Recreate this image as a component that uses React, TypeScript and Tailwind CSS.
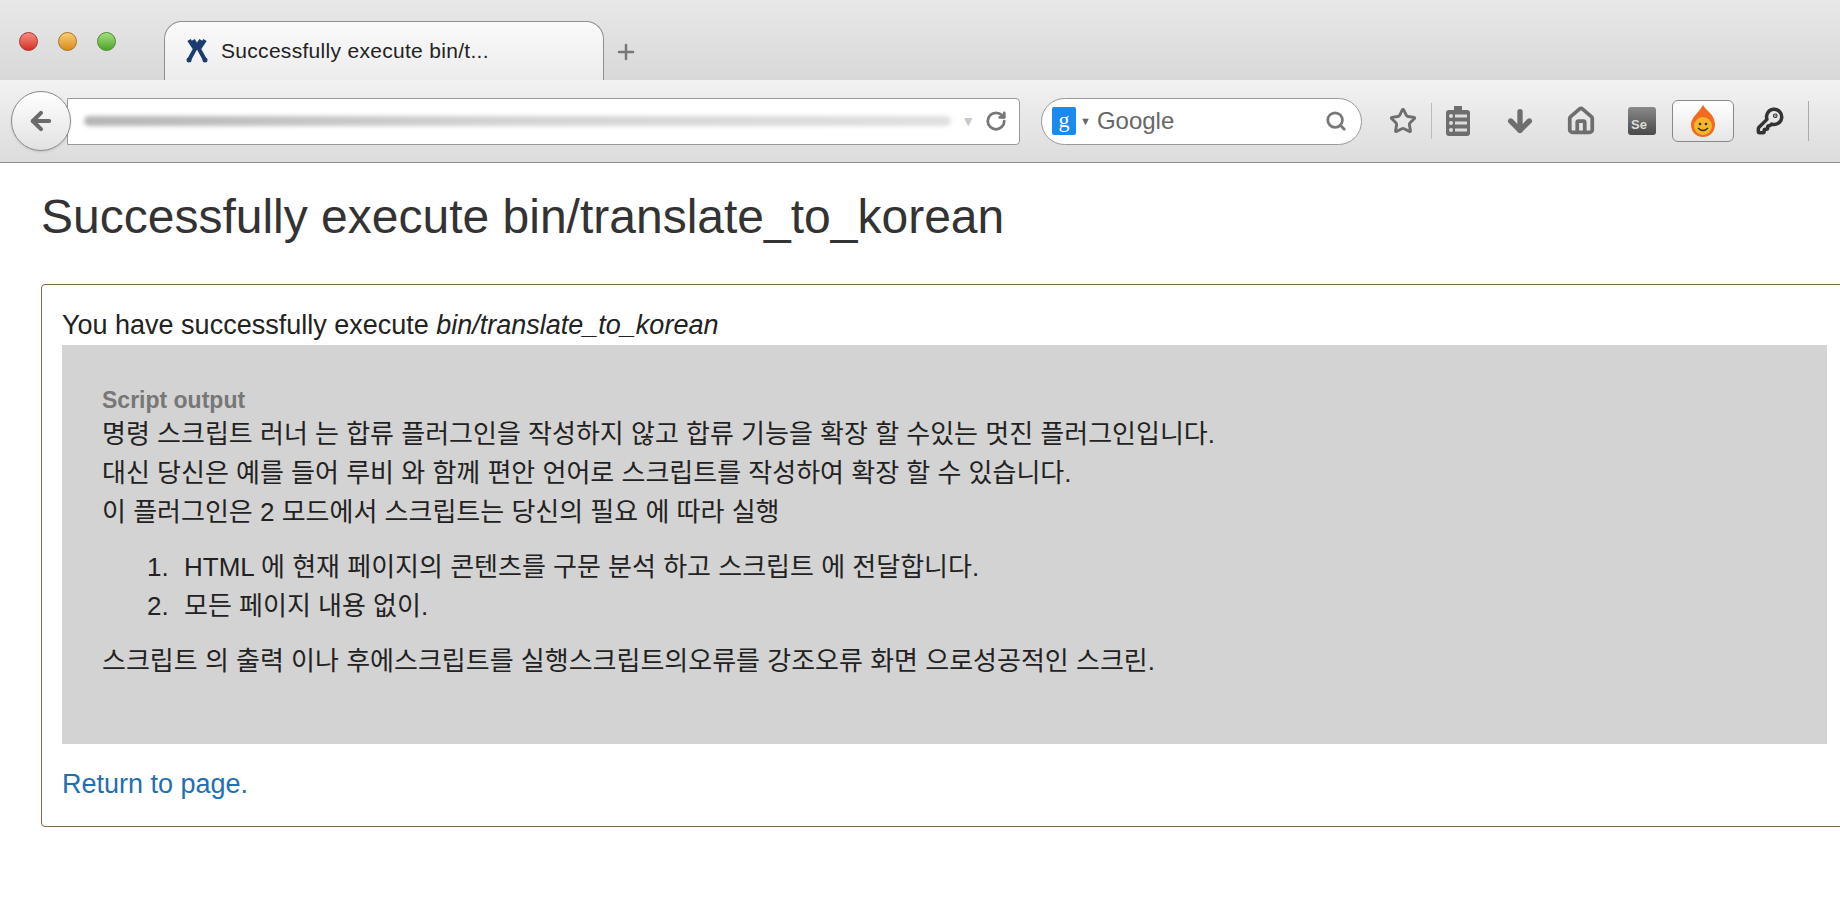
import { Star, ArrowDown, Home, KeyRound, RotateCw, Search, ArrowLeft, Plus } from 'lucide-react';

const ko = { fontFamily: '"Liberation Sans", "Noto Sans CJK KR", sans-serif' };

function Chrome() {
  return (
    <div className="bg-gradient-to-b from-[#e8e8e8] to-[#c9c9c9] border-b border-[#8f8f8f]" style={ko}>
      {/* Tab strip */}
      <div className="h-[80px] flex items-end relative">
        <div className="absolute left-[19px] top-[32px] flex gap-[20px]">
          <span className="w-[19px] h-[19px] rounded-full bg-gradient-to-b from-[#f58a83] to-[#d6291f] border border-[#a8342c]" />
          <span className="w-[19px] h-[19px] rounded-full bg-gradient-to-b from-[#f8cf6f] to-[#d98a15] border border-[#a87321]" />
          <span className="w-[19px] h-[19px] rounded-full bg-gradient-to-b from-[#a4e07d] to-[#4ea32c] border border-[#4d8a2c]" />
        </div>
        <div className="ml-[164px] w-[440px] h-[59px] bg-gradient-to-b from-[#fafafa] to-[#ececec] border border-b-0 border-[#8f8f8f] rounded-t-[18px] flex items-center pl-[20px] gap-[12px]">
          <svg width="24" height="26" viewBox="0 0 24 26">
            <path d="M4 2 L10 11 L4 22 M20 2 L14 11 L20 22 M8 2 L12 8 L16 2" stroke="#1c3b6e" strokeWidth="4" fill="none" />
            <circle cx="4" cy="22" r="2.5" fill="#1c3b6e" />
            <circle cx="20" cy="22" r="2.5" fill="#1c3b6e" />
          </svg>
          <span className="text-[21px] text-[#222] tracking-[0.3px]">Successfully execute bin/t...</span>
        </div>
        <Plus className="ml-[10px] mb-[16px] text-[#777]" size={24} strokeWidth={2.5} />
      </div>
      {/* Toolbar */}
      <div className="h-[82px] flex items-center bg-gradient-to-b from-[#f2f2f2] to-[#dcdcdc] pr-[6px]">
        <div className="ml-[11px] w-[60px] h-[60px] rounded-full border border-[#8a8a8a] bg-gradient-to-b from-white to-[#e2e2e2] flex items-center justify-center z-10 shadow">
          <ArrowLeft size={28} strokeWidth={3.5} className="text-[#6b6b6b]" />
        </div>
        <div className="-ml-[4px] w-[953px] h-[47px] bg-white border border-[#9a9a9a] rounded-r-[4px] flex items-center pl-[16px] pr-[12px] gap-[10px]">
          <div className="flex-1 h-[10px] rounded-full bg-gradient-to-r from-[#b5b5b5] via-[#d4d4d4] to-[#e0e0e0] blur-[2px]" />
          <span className="text-[#c8c8c8] text-[14px]">▼</span>
          <RotateCw size={22} strokeWidth={3} className="text-[#777]" />
        </div>
        <div className="ml-[21px] w-[321px] h-[47px] bg-white border border-[#9a9a9a] rounded-full flex items-center pl-[10px] pr-[14px]">
          <span className="w-[24px] h-[28px] bg-[#1a8af0] text-white text-[22px] leading-[26px] text-center rounded-[2px]" style={{ fontFamily: '"Liberation Serif", serif' }}>g</span>
          <span className="text-[#666] text-[11px] ml-[4px]">▼</span>
          <span className="ml-[6px] text-[24px] text-[#666] flex-1">Google</span>
          <Search size={22} strokeWidth={3} className="text-[#777]" />
        </div>
        <div className="ml-[27px] flex items-center text-[#6e6e6e]">
          <Star size={28} strokeWidth={2.5} />
          <span className="ml-[14px] w-px h-[36px] bg-[#bbb]" />
          <svg className="ml-[12px]" width="28" height="34" viewBox="0 0 28 34">
            <rect x="2" y="6" width="24" height="26" rx="3" fill="#6e6e6e" />
            <rect x="10" y="2" width="8" height="6" fill="#6e6e6e" />
            {[12, 19, 26].map((y) => (
              <g key={y}>
                <circle cx="7" cy={y} r="2" fill="#ddd" />
                <rect x="11" y={y - 1.5} width="12" height="3" fill="#ddd" />
              </g>
            ))}
          </svg>
          <ArrowDown className="ml-[32px]" size={32} strokeWidth={4} />
          <Home className="ml-[30px]" size={30} strokeWidth={3} />
          <div className="ml-[32px] w-[28px] h-[28px] rounded-[3px] bg-gradient-to-b from-[#8a8a8a] to-[#4a4a4a] text-[#ddd] text-[13px] font-bold flex items-end pl-[3px] pb-[1px]">Se</div>
          <div className="ml-[16px] w-[62px] h-[42px] rounded-[6px] border border-[#888] bg-gradient-to-b from-white to-[#e6e6e6] flex items-center justify-center">
            <svg width="30" height="34" viewBox="0 0 30 34">
              <path d="M15 1 C18 7 26 9 27 20 C27 28 22 33 15 33 C8 33 3 28 3 20 C4 12 10 10 15 1 Z" fill="#f26a1b" />
              <circle cx="15" cy="22" r="9" fill="#f7b52a" />
              <circle cx="12" cy="20" r="1.3" fill="#333" />
              <circle cx="18" cy="20" r="1.3" fill="#333" />
              <path d="M10 24 Q15 29 20 24" stroke="#333" strokeWidth="1.5" fill="none" />
            </svg>
          </div>
          <KeyRound className="ml-[22px] text-[#333]" size={28} strokeWidth={3} />
          <span className="ml-[24px] w-px h-[40px] bg-[#aaa]" />
        </div>
      </div>
    </div>
  );
}

export default function App() {
  return (
    <div className="w-[1840px] h-[900px] overflow-hidden bg-white" style={ko}>
      <Chrome />
      <div className="pl-[41px]">
        <h1 className="mt-[28px] text-[48px] leading-[52px] text-[#333]">Successfully execute bin/translate_to_korean</h1>
        <div className="mt-[41px] w-[1830px] h-[543px] border border-[#7a6a45] rounded-[4px] pl-[20px] pt-[20px]">
          <p className="text-[27px] leading-[40px] text-[#222]">
            You have successfully execute <em>bin/translate_to_korean</em>
          </p>
          <div className="w-[1765px] h-[399px] bg-[#d3d3d3] pl-[40px] pt-[40px] text-[26px] leading-[39px] text-[#222]">
            <div className="text-[23px] font-bold text-[#777] leading-[30px]">Script output</div>
            <p>명령 스크립트 러너 는 합류 플러그인을 작성하지 않고 합류 기능을 확장 할 수있는 멋진 플러그인입니다.</p>
            <p>대신 당신은 예를 들어 루비 와 함께 편안 언어로 스크립트를 작성하여 확장 할 수 있습니다.</p>
            <p>이 플러그인은 2 모드에서 스크립트는 당신의 필요 에 따라 실행</p>
            <ol className="list-decimal pl-[74px] my-[16px] text-[#222]">
              <li className="pl-[8px]">HTML 에 현재 페이지의 콘텐츠를 구문 분석 하고 스크립트 에 전달합니다.</li>
              <li className="pl-[8px]">모든 페이지 내용 없이.</li>
            </ol>
            <p>스크립트 의 출력 이나 후에스크립트를 실행스크립트의오류를 강조오류 화면 으로성공적인 스크린.</p>
          </div>
          <a className="block mt-[20px] text-[27px] leading-[40px] text-[#1f6fb2]" href="#">Return to page.</a>
        </div>
      </div>
    </div>
  );
}
